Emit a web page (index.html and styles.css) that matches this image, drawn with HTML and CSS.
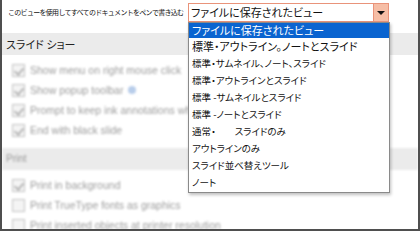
FILE: index.html
```html
<!DOCTYPE html>
<html lang="ja">
<head>
<meta charset="utf-8">
<link rel="stylesheet" href="styles.css">
</head>
<body>
<div class="window">
  <div class="toprow">
    <span class="label">このビューを使用してすべてのドキュメントをペンで書き込む</span>
    <div class="select">
      <span class="select-text">ファイルに保存されたビュー</span>
      <span class="arrow"></span>
    </div>
  </div>
  <div class="section-head">スライド ショー</div>
  <ul class="opts">
    <li><span class="cb checked"></span><span class="opt-text">Show menu on right mouse click</span></li>
    <li><span class="cb checked"></span><span class="opt-text">Show popup toolbar</span><span class="info"></span></li>
    <li><span class="cb checked"></span><span class="opt-text">Prompt to keep ink annotations when exiting</span></li>
    <li><span class="cb checked"></span><span class="opt-text">End with black slide</span></li>
  </ul>
  <div class="section-head blurred">Print</div>
  <ul class="opts">
    <li><span class="cb checked"></span><span class="opt-text">Print in background</span></li>
    <li><span class="cb"></span><span class="opt-text">Print TrueType fonts as graphics</span></li>
    <li><span class="cb"></span><span class="opt-text">Print inserted objects at printer resolution</span></li>
  </ul>
  <ul class="dropdown">
    <li class="selected">ファイルに保存されたビュー</li>
    <li class="big">標準・アウトライン。ノートとスライド</li>
    <li>標準・サムネイル、ノート、スライド</li>
    <li>標準・アウトラインとスライド</li>
    <li>標準 -サムネイルとスライド</li>
    <li>標準 -ノートとスライド</li>
    <li>通常・　　スライドのみ</li>
    <li>アウトラインのみ</li>
    <li>スライド並べ替えツール</li>
    <li>ノート</li>
  </ul>
</div>
</body>
</html>
```
FILE: styles.css
```css
* { box-sizing: border-box; }
html, body { margin: 0; padding: 0; background: #fff; }
body { width: 420px; height: 231px; overflow: hidden; font-family: "Noto Sans CJK JP", "Liberation Sans", sans-serif; }
.window {
  position: relative;
  width: 420px;
  height: 231px;
  border-left: 2px solid #4f4f4f;
  border-right: 2px solid #4f4f4f;
  border-bottom: 2px solid #4f4f4f;
  background: #fff;
  overflow: hidden;
}
.toprow {
  height: 33px;
  display: flex;
  align-items: flex-start;
  padding-top: 3px;
}
.label {
  font-size: 7px;
  letter-spacing: -0.7px;
  line-height: 19px;
  margin-left: 6px;
  width: 180px;
  overflow: hidden;
  color: #111;
  white-space: nowrap;
}
.select {
  display: flex;
  width: 201px;
  height: 19px;
  border: 1px solid #e9937a;
  background: #fff;
}
.select-text {
  flex: 1;
  font-size: 11px;
  line-height: 17px;
  padding-left: 2px;
  color: #111;
  font-feature-settings: "palt";
  white-space: nowrap;
}
.arrow {
  width: 15px;
  background: #f6bea6;
  border-left: 1px solid #e9937a;
  display: flex;
  align-items: center;
  justify-content: center;
}
.arrow::after {
  content: "";
  border-left: 4px solid transparent;
  border-right: 4px solid transparent;
  border-top: 4px solid #111;
}
.section-head {
  height: 22px;
  background: #ebebeb;
  font-size: 11px;
  line-height: 22px;
  padding-left: 4px;
  color: #222;
  font-feature-settings: "palt";
}
.section-head.blurred {
  color: #9a9a9a;
  font-family: "Liberation Sans", sans-serif;
  font-size: 10px;
  filter: blur(0.8px);
}
.opts {
  list-style: none;
  margin: 0;
  padding: 5px 0 8px 10px;
  filter: blur(0.9px);
}
.opts li {
  height: 20px;
  display: flex;
  align-items: center;
  white-space: nowrap;
}
.cb {
  width: 13px;
  height: 13px;
  border: 1px solid #c4c4c4;
  background: #f4f4f4;
  margin-right: 5px;
  position: relative;
}
.cb.checked::after {
  content: "";
  position: absolute;
  left: 3px;
  top: 1px;
  width: 4px;
  height: 7px;
  border-right: 2px solid #b8b8b8;
  border-bottom: 2px solid #b8b8b8;
  transform: rotate(40deg);
}
.opt-text {
  font-family: "Liberation Sans", sans-serif;
  font-size: 10.5px;
  color: #9c9c9c;
}
.info {
  width: 8px;
  height: 8px;
  border-radius: 50%;
  background: #b8cdea;
  margin-left: 5px;
}
.dropdown {
  position: absolute;
  left: 186px;
  top: 22px;
  width: 202px;
  margin: 0;
  padding: 0 0 1px 0;
  list-style: none;
  background: #fff;
  border: 1px solid #8a8a8a;
  box-shadow: 1px 2px 3px rgba(0,0,0,0.25);
}
.dropdown li {
  height: 17px;
  line-height: 17px;
  font-size: 9.5px;
  padding-left: 3px;
  color: #111;
  white-space: nowrap;
  font-feature-settings: "palt";
}
.dropdown li.selected {
  height: 15px;
  line-height: 15px;
  font-size: 11px;
  background: #0a64d0;
  color: #fff;
}
.dropdown li.big {
  font-size: 11px;
}
```
